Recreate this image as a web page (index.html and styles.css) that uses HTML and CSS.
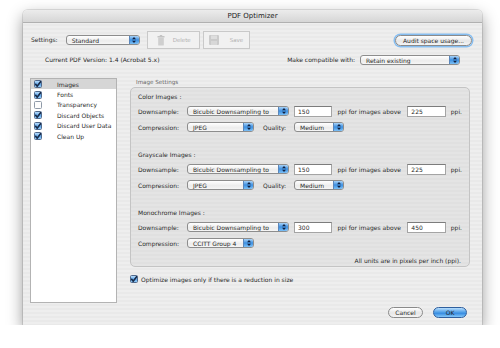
FILE: index.html
```html
<!DOCTYPE html>
<html lang="en">
<head>
<meta charset="UTF-8">
<meta name="viewport" content="width=device-width, initial-scale=1.0">
<title>PDF Optimizer</title>
<link rel="stylesheet" href="styles.css">
</head>
<body>

<div class="window">
  <div class="titlebar">PDF Optimizer</div>

  <div class="toprow">
    <span class="label">Settings:</span>
    <div class="popup settings-popup">Standard<span class="cap"><svg width="4" height="6" viewBox="0 0 4 6"><path d="M2 0L4 2.3H0z M2 6L4 3.7H0z" fill="#102040"/></svg></span></div>
    <div class="bevel delete-btn">
      <svg width="8" height="11" viewBox="0 0 8 11"><rect x="0.5" y="1" width="7" height="1.5" fill="#c4c4c4"/><rect x="1.2" y="2.5" width="5.6" height="8" rx="0.6" fill="#cfcfcf"/><rect x="2.8" y="0" width="2.4" height="1.2" fill="#c4c4c4"/></svg>
      <span>Delete</span>
    </div>
    <div class="bevel save-btn">
      <svg width="10" height="10" viewBox="0 0 10 10"><rect width="10" height="10" rx="1" fill="#cbcbcb"/><rect x="2" y="0.5" width="6" height="3.5" fill="#dedede"/><rect x="2" y="6" width="6" height="4" fill="#d8d8d8"/></svg>
      <span>Save</span>
    </div>
    <div class="spacer"></div>
    <div class="pill audit-btn">Audit space usage...</div>
  </div>

  <div class="versionrow">
    <span class="label">Current PDF Version: 1.4 (Acrobat 5.x)</span>
    <div class="spacer"></div>
    <span class="label">Make compatible with:</span>
    <div class="popup compat-popup">Retain existing<span class="cap"><svg width="4" height="6" viewBox="0 0 4 6"><path d="M2 0L4 2.3H0z M2 6L4 3.7H0z" fill="#102040"/></svg></span></div>
  </div>

  <div class="main">
    <ul class="panels">
      <li class="selected"><span class="check on"></span>Images</li>
      <li><span class="check on"></span>Fonts</li>
      <li><span class="check"></span>Transparency</li>
      <li><span class="check on"></span>Discard Objects</li>
      <li><span class="check on"></span>Discard User Data</li>
      <li><span class="check on"></span>Clean Up</li>
    </ul>

    <div class="settings">
      <div class="group-title">Image Settings</div>
      <div class="group">

        <div class="section">
          <div class="section-title">Color Images :</div>
          <div class="row">
            <span class="row-label">Downsample:</span>
            <div class="popup down-popup">Bicubic Downsampling to<span class="cap"><svg width="4" height="6" viewBox="0 0 4 6"><path d="M2 0L4 2.3H0z M2 6L4 3.7H0z" fill="#102040"/></svg></span></div>
            <div class="field">150</div>
            <span class="ppi-text">ppi for images above</span>
            <div class="field">225</div>
            <span class="ppi-end">ppi.</span>
          </div>
          <div class="row">
            <span class="row-label">Compression:</span>
            <div class="popup comp-popup">JPEG<span class="cap"><svg width="4" height="6" viewBox="0 0 4 6"><path d="M2 0L4 2.3H0z M2 6L4 3.7H0z" fill="#102040"/></svg></span></div>
            <span class="quality-label">Quality:</span>
            <div class="popup quality-popup">Medium<span class="cap"><svg width="4" height="6" viewBox="0 0 4 6"><path d="M2 0L4 2.3H0z M2 6L4 3.7H0z" fill="#102040"/></svg></span></div>
          </div>
        </div>

        <div class="section">
          <div class="section-title">Grayscale Images :</div>
          <div class="row">
            <span class="row-label">Downsample:</span>
            <div class="popup down-popup">Bicubic Downsampling to<span class="cap"><svg width="4" height="6" viewBox="0 0 4 6"><path d="M2 0L4 2.3H0z M2 6L4 3.7H0z" fill="#102040"/></svg></span></div>
            <div class="field">150</div>
            <span class="ppi-text">ppi for images above</span>
            <div class="field">225</div>
            <span class="ppi-end">ppi.</span>
          </div>
          <div class="row">
            <span class="row-label">Compression:</span>
            <div class="popup comp-popup">JPEG<span class="cap"><svg width="4" height="6" viewBox="0 0 4 6"><path d="M2 0L4 2.3H0z M2 6L4 3.7H0z" fill="#102040"/></svg></span></div>
            <span class="quality-label">Quality:</span>
            <div class="popup quality-popup">Medium<span class="cap"><svg width="4" height="6" viewBox="0 0 4 6"><path d="M2 0L4 2.3H0z M2 6L4 3.7H0z" fill="#102040"/></svg></span></div>
          </div>
        </div>

        <div class="section">
          <div class="section-title">Monochrome Images :</div>
          <div class="row">
            <span class="row-label">Downsample:</span>
            <div class="popup down-popup">Bicubic Downsampling to<span class="cap"><svg width="4" height="6" viewBox="0 0 4 6"><path d="M2 0L4 2.3H0z M2 6L4 3.7H0z" fill="#102040"/></svg></span></div>
            <div class="field">300</div>
            <span class="ppi-text">ppi for images above</span>
            <div class="field">450</div>
            <span class="ppi-end">ppi.</span>
          </div>
          <div class="row">
            <span class="row-label">Compression:</span>
            <div class="popup comp-popup">CCITT Group 4<span class="cap"><svg width="4" height="6" viewBox="0 0 4 6"><path d="M2 0L4 2.3H0z M2 6L4 3.7H0z" fill="#102040"/></svg></span></div>
          </div>
        </div>

        <div class="units">All units are in pixels per inch (ppi).</div>
      </div>

      <div class="optimize"><span class="check on"></span>Optimize images only if there is a reduction in size</div>
    </div>
  </div>

  <div class="buttons">
    <div class="pill cancel-btn">Cancel</div>
    <div class="pill ok-btn">OK</div>
  </div>
</div>

</body>
</html>
```

FILE: styles.css
```css
body {
  margin: 0;
  background: #fff;
  font-family: "DejaVu Sans", sans-serif;
  font-size: 6px;
  color: #2a2a2a;
}

.window {
  margin: 10px 0 0 23px;
  width: 459px;
  height: 315px;
  box-sizing: border-box;
  border-radius: 5px 5px 0 0;
  background: repeating-linear-gradient(#eeeeee 0 2px, #e9e9e9 2px 4px);
  box-shadow: 0 6px 16px rgba(0, 0, 0, 0.42), 0 0 0 1px rgba(0, 0, 0, 0.1);
  overflow: hidden;
}

.titlebar {
  height: 13px;
  line-height: 13px;
  text-align: center;
  font-size: 7px;
  color: #222;
  background: linear-gradient(#ececec, #d6d6d6);
  border-bottom: 1px solid #b0b0b0;
  box-sizing: border-box;
}

.spacer {
  flex: 1;
}

.label {
  line-height: 10px;
}

/* top rows */
.toprow {
  display: flex;
  align-items: center;
  height: 18px;
  margin-top: 8px;
  padding: 0 10px 0 8px;
}
.settings-popup {
  width: 74px;
  margin-left: 8px;
}
.bevel {
  height: 18px;
  box-sizing: border-box;
  border: 1px solid #c9c9c9;
  background: #f1f1f1;
  display: flex;
  align-items: center;
  color: #b0b0b0;
  font-size: 5.5px;
}
.delete-btn {
  width: 53px;
  margin-left: 7px;
  padding-left: 9px;
}
.delete-btn span {
  margin-left: 8px;
}
.save-btn {
  width: 47px;
  margin-left: 3px;
  padding-left: 5px;
}
.save-btn span {
  margin-left: 11px;
}
.audit-btn {
  width: 77px;
  height: 11px;
  box-shadow: 0 0 0 1.5px #86bdf0;
}

.versionrow {
  display: flex;
  align-items: center;
  height: 12px;
  margin-top: 5px;
  padding: 0 22px 0 22px;
}
.compat-popup {
  width: 100px;
  margin-left: 5px;
}

/* aqua controls */
.popup {
  position: relative;
  height: 10px;
  line-height: 9px;
  box-sizing: border-box;
  border: 1px solid #8d8d8d;
  border-radius: 3px;
  background: linear-gradient(#ffffff, #ececec 60%, #f6f6f6);
  padding-left: 5px;
  white-space: nowrap;
  overflow: hidden;
  flex-shrink: 0;
}
.popup .cap {
  position: absolute;
  right: 0;
  top: 0;
  bottom: 0;
  width: 9px;
  background: linear-gradient(#a9d3f8, #3d8fe0 50%, #7cc0f6);
  border-left: 1px solid #5a86bb;
  display: flex;
  align-items: center;
  justify-content: center;
}

.pill {
  height: 11px;
  line-height: 9px;
  box-sizing: border-box;
  border: 1px solid #8a8a8a;
  border-radius: 6px;
  background: linear-gradient(#ffffff, #e6e6e6 55%, #f4f4f4);
  text-align: center;
}

.field {
  width: 39px;
  height: 11px;
  line-height: 10px;
  box-sizing: border-box;
  border: 1px solid #a4a4a4;
  border-top-color: #7c7c7c;
  background: #fff;
  padding-left: 3px;
  margin-left: 5px;
}

/* main area */
.main {
  display: flex;
  margin-top: 12px;
  padding-left: 7px;
  height: 225px;
}

.panels {
  list-style: none;
  margin: 0;
  padding: 0;
  width: 87px;
  height: 225px;
  box-sizing: border-box;
  background: #fff;
  border: 1px solid #b3b3b3;
}
.panels li {
  height: 10.4px;
  display: flex;
  align-items: center;
  padding-left: 3px;
}
.panels li.selected {
  background: #d6d6d6;
}
.panels .check {
  margin-right: 15px;
}

.check {
  display: inline-block;
  width: 8px;
  height: 8px;
  box-sizing: border-box;
  border: 1px solid #8f9aa8;
  border-radius: 1.5px;
  background: #fdfdfd;
  flex-shrink: 0;
}
.check.on {
  border-color: #50698c;
  background:
    url("data:image/svg+xml;utf8,<svg xmlns='http://www.w3.org/2000/svg' width='8' height='8' viewBox='0 0 8 8'><path d='M1.3 3.8L3.2 6.2L7.4 0.6' stroke='%23182a48' stroke-width='1.6' fill='none'/></svg>") center / 8px 8px no-repeat,
    linear-gradient(#b9dcfb, #5fa8ec 55%, #94cbf7);
}

.settings {
  margin-left: 13px;
  width: 340px;
}
.group-title {
  height: 9px;
  line-height: 9px;
  padding-left: 6px;
  color: #666;
  font-size: 5.6px;
}
.group {
  height: 180px;
  box-sizing: border-box;
  border: 1px solid #c4c4c4;
  border-radius: 5px;
  background: repeating-linear-gradient(#e4e4e4 0 2px, #e0e0e0 2px 4px);
  padding: 3px 7px 0 7px;
}
.section + .section {
  margin-top: 14px;
}
.section-title {
  height: 12px;
  line-height: 12px;
}
.row {
  display: flex;
  align-items: center;
  height: 16px;
}
.row-label {
  width: 49px;
  flex-shrink: 0;
}
.down-popup {
  width: 102px;
}
.comp-popup {
  width: 67px;
}
.quality-popup {
  width: 50px;
}
.ppi-text {
  margin-left: 5px;
  width: 66px;
}
.ppi-end {
  margin-left: 5px;
}
.quality-label {
  margin-left: 9px;
  width: 31px;
}
.units {
  text-align: right;
  margin-top: 4px;
  padding-right: 1px;
  height: 12px;
  line-height: 12px;
}

.optimize {
  display: flex;
  align-items: center;
  height: 12px;
  margin-top: 6px;
}
.optimize .check {
  margin-right: 3px;
}

/* bottom buttons */
.buttons {
  display: flex;
  justify-content: flex-end;
  margin-top: 4px;
  padding-right: 15px;
}
.cancel-btn {
  width: 35px;
}
.ok-btn {
  width: 34px;
  margin-left: 10px;
  border-color: #2f5f9e;
  background: linear-gradient(#b8defd, #4a9be6 50%, #3a8ee2 60%, #86c8fa);
}
```
